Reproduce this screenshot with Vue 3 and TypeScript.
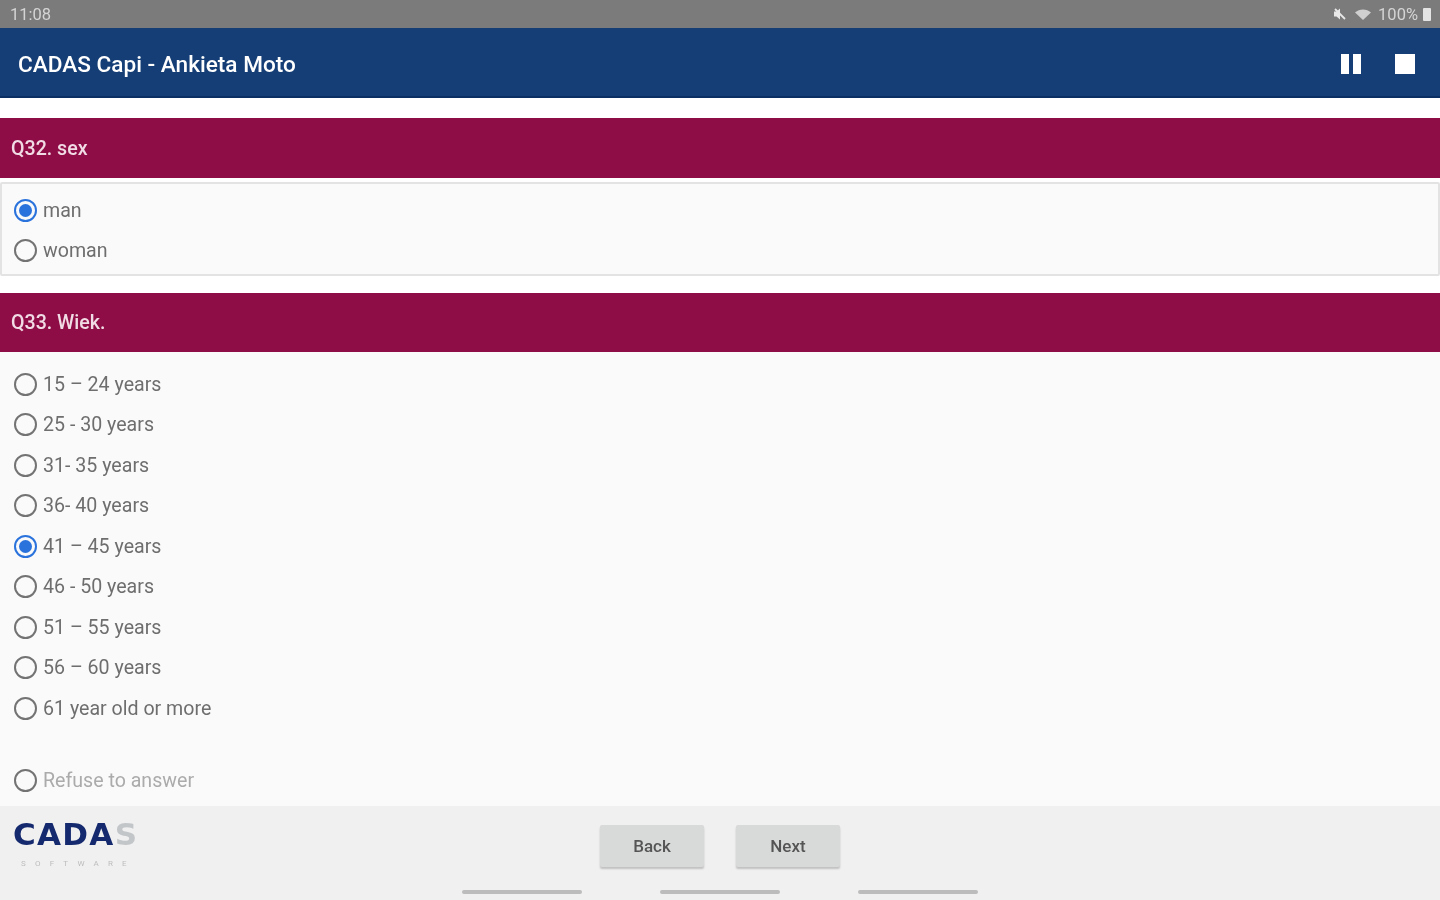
<script setup lang="ts">
const sexOptions = [
  { label: 'man', checked: true },
  { label: 'woman', checked: false },
]

const ageOptions = [
  { label: '15 – 24 years', checked: false },
  { label: '25 - 30 years', checked: false },
  { label: '31- 35 years', checked: false },
  { label: '36- 40 years', checked: false },
  { label: '41 – 45 years', checked: true },
  { label: '46 - 50 years', checked: false },
  { label: '51 – 55 years', checked: false },
  { label: '56 – 60 years', checked: false },
  { label: '61 year old or more', checked: false },
]
</script>

<template>
  <div class="screen">
    <div class="status-bar">
      <span class="time">11:08</span>
      <div class="status-icons">
        <svg width="14" height="14" viewBox="0 0 14 14">
          <path d="M1 4.5h2.5L7 1.5v11L3.5 9.5H1z" fill="#e8e8e8" />
          <path d="M2 2l10 10" stroke="#e8e8e8" stroke-width="1.8" />
        </svg>
        <svg class="wifi" width="18" height="14" viewBox="0 0 18 14">
          <path d="M1 5.5C5.5 1.5 12.5 1.5 17 5.5L9 13z" fill="#cfcfcf" />
        </svg>
        <span class="battery-text">100%</span>
        <span class="battery"></span>
      </div>
    </div>

    <header class="app-bar">
      <span class="app-title">CADAS Capi - Ankieta Moto</span>
      <div class="app-actions">
        <div class="pause"><span></span><span></span></div>
        <div class="stop"></div>
      </div>
    </header>

    <main class="content">
      <h2 class="question">Q32. sex</h2>
      <div class="answers boxed">
        <label v-for="o in sexOptions" :key="o.label" class="option">
          <span class="radio" :class="{ checked: o.checked }"></span>
          <span>{{ o.label }}</span>
        </label>
      </div>

      <h2 class="question second">Q33. Wiek.</h2>
      <div class="answers list">
        <label v-for="o in ageOptions" :key="o.label" class="option">
          <span class="radio" :class="{ checked: o.checked }"></span>
          <span>{{ o.label }}</span>
        </label>
        <label class="option refuse">
          <span class="radio"></span>
          <span>Refuse to answer</span>
        </label>
      </div>
    </main>

    <footer class="footer">
      <div class="logo">
        <div class="logo-name">CADA<span>S</span></div>
        <div class="logo-sub">SOFTWARE</div>
      </div>
      <div class="buttons">
        <button class="btn">Back</button>
        <button class="btn">Next</button>
      </div>
      <div class="nav-hints">
        <span></span><span></span><span></span>
      </div>
    </footer>
  </div>
</template>

<style>
html,
body {
  margin: 0;
  background: #fafafa;
}
</style>

<style scoped>
.screen {
  width: 1440px;
  height: 900px;
  display: flex;
  flex-direction: column;
  overflow: hidden;
  font-family: Roboto, "Liberation Sans", sans-serif;
  background: #fff;
  filter: blur(0.7px);
}

.status-bar {
  height: 28px;
  flex: none;
  background: #7b7b7b;
  display: flex;
  align-items: center;
  justify-content: space-between;
  padding: 0 9px 0 10px;
  color: #d4d4d4;
  font-size: 16.5px;
}

.status-icons {
  display: flex;
  align-items: center;
  gap: 6px;
}

.wifi {
  margin-left: 1px;
}

.battery-text {
  font-size: 16.5px;
}

.battery {
  width: 8px;
  height: 13px;
  background: #e4e4e4;
  border-radius: 1px;
  margin-left: -1px;
}

.app-bar {
  height: 70px;
  flex: none;
  box-sizing: border-box;
  background: #143e75;
  border-bottom: 2px solid #0c2f63;
  display: flex;
  align-items: center;
  justify-content: space-between;
  padding: 4px 25px 0 18px;
}

.app-title {
  color: #fff;
  font-size: 22.6px;
  font-weight: 500;
}

.app-actions {
  display: flex;
  align-items: center;
  gap: 34px;
}

.pause {
  display: flex;
  gap: 4px;
}

.pause span {
  width: 8px;
  height: 20px;
  background: #fff;
}

.stop {
  width: 20px;
  height: 20px;
  background: #fff;
}

.content {
  flex: 1;
  display: flex;
  flex-direction: column;
  padding-top: 20px;
  min-height: 0;
}

.question {
  margin: 0;
  height: 60px;
  flex: none;
  box-sizing: border-box;
  background: #8e0d46;
  color: #f1dbe4;
  font-size: 19.6px;
  font-weight: 500;
  display: flex;
  align-items: center;
  padding-left: 11px;
}

.question.second {
  margin-top: 17px;
  height: 59px;
}

.answers {
  background: #fafafa;
  display: flex;
  flex-direction: column;
}

.boxed {
  margin-top: 4px;
  height: 94px;
  box-sizing: border-box;
  border: 2px solid #e3e3e3;
  border-radius: 2px;
  padding: 6px 0 0 12px;
}

.list {
  flex: 1;
  padding: 12px 0 0 14px;
}

.option {
  height: 40.5px;
  flex: none;
  display: flex;
  align-items: center;
  gap: 6px;
  color: #6e6e6e;
  font-size: 19.6px;
}

.refuse {
  margin-top: 32px;
  color: #ababab;
}

.radio {
  width: 23px;
  height: 23px;
  box-sizing: border-box;
  border: 2px solid #737373;
  border-radius: 50%;
  flex: none;
  position: relative;
}

.radio.checked {
  border-color: #2b73dc;
}

.radio.checked::after {
  content: "";
  position: absolute;
  inset: 3px;
  border-radius: 50%;
  background: #2b73dc;
}

.footer {
  height: 94px;
  flex: none;
  background: #f0f0f0;
  position: relative;
  display: flex;
  justify-content: center;
}

.logo {
  position: absolute;
  left: 13px;
  top: 10px;
}

.logo-name {
  color: #14296e;
  font-family: "DejaVu Sans", sans-serif;
  font-size: 31px;
  line-height: 36px;
  font-weight: 700;
  letter-spacing: 1.3px;
}

.logo-name span {
  color: #c3c6c9;
}

.logo-sub {
  margin: 7px 0 0 8px;
  color: #bdbdbd;
  font-size: 8px;
  line-height: 10px;
  letter-spacing: 9.2px;
}

.buttons {
  display: flex;
  gap: 32px;
  padding-top: 19px;
}

.btn {
  width: 104px;
  height: 42px;
  border: none;
  border-radius: 2px;
  background: #d8d9d9;
  box-shadow: 0 2px 2px rgba(0, 0, 0, 0.2);
  color: #555;
  font-family: inherit;
  font-size: 17px;
  font-weight: 500;
}

.nav-hints {
  position: absolute;
  left: 462px;
  top: 84px;
  display: flex;
  gap: 78px;
}

.nav-hints span {
  width: 120px;
  height: 4px;
  background: #bcbcbc;
  border-radius: 2px;
}
</style>
